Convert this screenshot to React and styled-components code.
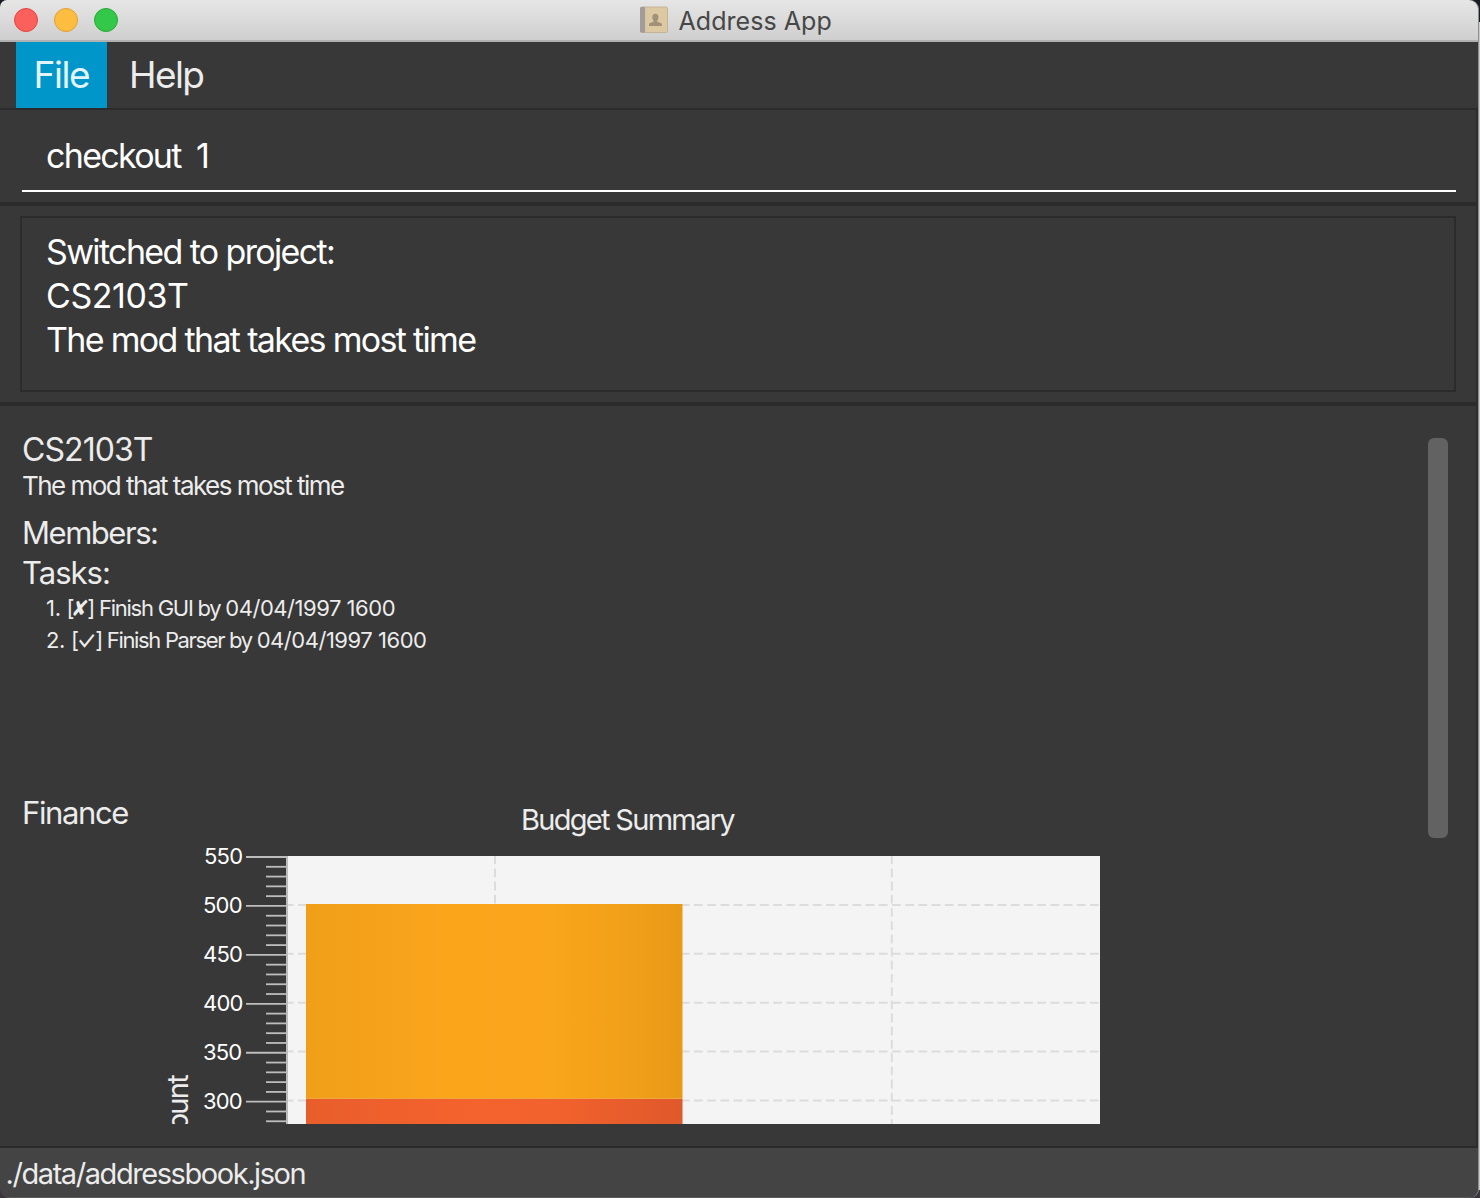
import React from 'react';
import styled, { createGlobalStyle } from 'styled-components';

const Global = createGlobalStyle`
  * { box-sizing: border-box; }
  body { margin: 0; background: linear-gradient(#171c25 0 22px, #c9c9c9 22px 1190px, #3b353b 1190px); }
`;

const Window = styled.div`
  width: 1478px;
  height: 1198px;
  display: flex;
  flex-direction: column;
  overflow: hidden;
  border-radius: 7px 9px 9px 9px;
  background: #383838;
  box-shadow: 1px 0 0 #8f8f8f;
  color: #ececec;
  font-family: Inter, "DejaVu Sans", sans-serif;
  white-space: pre;
`;

const TitleBar = styled.header`
  flex: none;
  height: 42px;
  display: flex;
  align-items: center;
  padding-left: 14px;
  background: linear-gradient(#e6e6e6, #cfcfcf);
  border-bottom: 2px solid #b1b1b1;
`;

const Lights = styled.div`
  display: flex;
  gap: 16px;
`;

const Light = styled.span`
  width: 24px;
  height: 24px;
  border-radius: 50%;
  background: ${(p) => p.$fill};
  border: 1px solid ${(p) => p.$edge};
`;

const Caption = styled.div`
  display: flex;
  align-items: center;
  margin-left: 522px;
  gap: 10.5px;
`;

const CaptionText = styled.span`
  padding-top: 2px;
  color: #474747;
  font-size: 25px;
  line-height: 30px;
  letter-spacing: 0.05px;
`;

const MenuBar = styled.nav`
  flex: none;
  height: 68px;
  display: flex;
  padding-left: 16px;
  border-bottom: 2px solid #2b2b2b;
`;

const MenuItem = styled.div`
  height: 66px;
  width: ${(p) => p.$width}px;
  padding-left: ${(p) => p.$inset}px;
  font-size: 37px;
  line-height: 66px;
  letter-spacing: ${(p) => p.$spacing}px;
  color: ${(p) => (p.$active ? '#e4f4fb' : '#ececec')};
  background: ${(p) => (p.$active ? '#0096c9' : 'transparent')};
`;

const Body = styled.main`
  flex: 1;
  display: flex;
  flex-direction: column;
  border-right: 2px solid #2d2d2d;
`;

const CommandPane = styled.section`
  flex: none;
  height: 96px;
  padding: 0 20px 10px 22px;
  border-bottom: 4px solid #2b2b2b;
`;

const CommandField = styled.div`
  height: 82px;
  padding: 24px 0 0 24px;
  border-bottom: 2px solid #fff;
  color: #fff;
  font-size: 34px;
  line-height: 43px;
  letter-spacing: -1.7px;
  word-spacing: 7.4px;
`;

const ResultPane = styled.section`
  flex: none;
  height: 200px;
  padding: 10px 20px 10px 20px;
  border-bottom: 4px solid #2b2b2b;
`;

const ResultBox = styled.div`
  height: 176px;
  padding: 12px 0 0 24px;
  border: 2px solid #2b2b2b;
  color: #fff;
  font-size: 34px;
  line-height: 44px;
`;

const Line = styled.div`
  letter-spacing: ${(p) => p.$spacing}px;
`;

const ProjectPane = styled.section`
  flex: 1;
  display: flex;
  justify-content: space-between;
  padding: 24px 28px 22px 22px;
`;

const Project = styled.div`
  height: 694px;
  overflow: hidden;
`;

const ScrollThumb = styled.div`
  flex: none;
  width: 20px;
  height: 400px;
  margin-top: 8px;
  border-radius: 6px;
  background: #626262;
`;

const ProjectName = styled.div`
  font-size: 32px;
  line-height: 39px;
  letter-spacing: -0.93px;
`;

const Description = styled.div`
  margin-top: 1px;
  font-size: 26px;
  line-height: 31px;
  letter-spacing: -1.52px;
`;

const Heading = styled.div`
  margin-top: ${(p) => p.$gap}px;
  font-size: 31px;
  line-height: 37px;
  letter-spacing: ${(p) => p.$spacing}px;
`;

const TaskList = styled.div`
  height: 202px;
  margin-top: 1px;
  padding-left: 24px;
`;

const Task = styled.div`
  display: flex;
  height: 32px;
  font-size: 22px;
  line-height: 32px;
`;

const TaskIndex = styled.span`
  letter-spacing: -0.3px;
`;

const Mark = styled.span`
  display: flex;
  justify-content: center;
  width: ${(p) => p.$width}px;
  transform: ${(p) => p.$shape};
`;

const TaskText = styled.span`
  letter-spacing: ${(p) => p.$spacing}px;
`;

const FinanceRow = styled.div`
  display: flex;
`;

const FinanceTitle = styled.div`
  width: 134px;
  font-size: 31px;
  line-height: 37px;
  letter-spacing: -1.38px;
`;

const ChartPanel = styled.div`
  width: 944px;
  padding-top: 8px;
`;

const ChartTitle = styled.div`
  height: 36px;
  padding-left: 365px;
  font-size: 29px;
  line-height: 35px;
  letter-spacing: -1.7px;
`;

const ChartSvg = styled.svg`
  display: block;
  font-family: Inter, sans-serif;
`;

const TickLabel = styled.text`
  font-size: 22px;
  letter-spacing: -0.8px;
  fill: #fff;
`;

const AxisLabel = styled.text`
  font-size: 29px;
  letter-spacing: -1.72px;
  fill: #ececec;
`;

const StatusBar = styled.footer`
  flex: none;
  height: 52px;
  padding: 8px 0 0 5.5px;
  border-top: 2px solid #2b2b2b;
  background: #444;
  box-shadow: inset 0 -1px 0 #5a5a5a;
  font-size: 29px;
  line-height: 35px;
  letter-spacing: -1.43px;
`;

const STEP = 48.94;
const TICKS = [550, 500, 450, 400, 350, 300];
const MINORS = Array.from({ length: 28 }, (_, i) => i).filter((i) => i % 5 !== 0);

function BookIcon() {
  return (
    <svg width="28" height="28" viewBox="0 0 28 28">
      <rect x="0.5" y="1" width="27" height="25.5" rx="1.5" fill="#dcc8a1" stroke="#c3b497" />
      <path d="M1.5 1H5v25.5H1.5A1.5 1.5 0 0 1 0 25V2.5A1.5 1.5 0 0 1 1.5 1Z" fill="#a39c98" />
      <path d="M5.5 1.5v24.5" stroke="#cfc5b5" />
      <path d="M9 20v-2.2c1.2-1.5 3.6-1.6 4.9-2.4-1.3-1.5-1.700-3.3-1.5-5 .2-1.900 1.600-2.600 3-2.600s2.800.7 3 2.600c.2 1.700-.2 3.500-1.500 5 1.300.8 3.800.9 5 2.400V20Z" fill="#a2917a" />
    </svg>
  );
}

function BudgetChart() {
  return (
    <ChartSvg width="944" height="286" viewBox="156 838 944 286">
      <defs>
        <linearGradient id="planned">
          <stop offset="0" stopColor="#f09f19" />
          <stop offset="0.2" stopColor="#f6a21b" />
          <stop offset="0.37" stopColor="#fba51b" />
          <stop offset="0.65" stopColor="#faa51b" />
          <stop offset="0.85" stopColor="#f1a019" />
          <stop offset="1" stopColor="#e89917" />
        </linearGradient>
        <linearGradient id="spent">
          <stop offset="0" stopColor="#e85e2b" />
          <stop offset="0.25" stopColor="#f0602d" />
          <stop offset="0.45" stopColor="#f4632d" />
          <stop offset="0.65" stopColor="#f2622d" />
          <stop offset="1" stopColor="#e0592a" />
        </linearGradient>
      </defs>
      <rect x="288" y="856" width="812" height="268" fill="#f4f4f4" />
      <g stroke="#dcdcdc" strokeWidth="2" strokeDasharray="8.8 4.4">
        <path d="M495 856V1124M891.8 856V1124" strokeDashoffset="0.8" />
        {TICKS.slice(1).map((t, i) => (
          <path key={t} d={`M288 ${905 + i * 48.87}H1100`} strokeDashoffset="3.2" />
        ))}
      </g>
      <rect x="306" y="904" width="376.5" height="194.5" fill="url(#planned)" />
      <rect x="306" y="1099" width="376.5" height="25" fill="url(#spent)" />
      <path d="M306 1098.5H682.5" stroke="#f2a73e" />
      <g stroke="#bdbdbd">
        <path d="M287 856V1124" strokeWidth="2" />
        {TICKS.map((t, i) => (
          <path key={t} d={`M246 ${857 + i * STEP}H286`} strokeWidth="1.8" />
        ))}
        {MINORS.map((i) => (
          <path key={i} d={`M266 ${857 + (i * STEP) / 5}H286`} strokeWidth="1.8" />
        ))}
      </g>
      {TICKS.map((t, i) => (
        <TickLabel key={t} x={t === 550 ? 204 : 203} y={864.4 + i * 48.94}>{t}</TickLabel>
      ))}
      <AxisLabel transform="translate(188 1172.3) rotate(-90)">Amount</AxisLabel>
    </ChartSvg>
  );
}

export default function App() {
  return (
    <>
      <Global />
      <Window>
        <TitleBar>
          <Lights>
            <Light $fill="#fc605c" $edge="#e2463f" />
            <Light $fill="#fdbd41" $edge="#dfa033" />
            <Light $fill="#34c84a" $edge="#27aa35" />
          </Lights>
          <Caption>
            <BookIcon />
            <CaptionText>Address App</CaptionText>
          </Caption>
        </TitleBar>
        <MenuBar>
          <MenuItem $active $width={91} $inset={17.5} $spacing={-1.42}>File</MenuItem>
          <MenuItem $width={110} $inset={22} $spacing={-1.57}>Help</MenuItem>
        </MenuBar>
        <Body>
          <CommandPane>
            <CommandField>checkout 1</CommandField>
          </CommandPane>
          <ResultPane>
            <ResultBox>
              <Line $spacing={-1.64}>Switched to project:</Line>
              <Line $spacing={-0.44}>CS2103T</Line>
              <Line $spacing={-1.68}>The mod that takes most time</Line>
            </ResultBox>
          </ResultPane>
          <ProjectPane>
            <Project>
              <ProjectName>CS2103T</ProjectName>
              <Description>The mod that takes most time</Description>
              <Heading $gap={13} $spacing={-1.47}>Members:</Heading>
              <Heading $gap={3} $spacing={-0.98}>Tasks:</Heading>
              <TaskList>
                <Task>
                  <TaskIndex>1. [</TaskIndex>
                  <Mark $width={13} $shape="translateX(-0.5px) skewX(-10deg) scaleX(0.85)">✘</Mark>
                  <TaskText $spacing={-1.26}>] Finish GUI by </TaskText>
                  <TaskText $spacing={-0.47}>04/04/1997 1600</TaskText>
                </Task>
                <Task>
                  <TaskIndex>2. [</TaskIndex>
                  <Mark $width={16.5} $shape="translateX(-0.5px) scale(1, 1.25)">✓</Mark>
                  <TaskText $spacing={-1.34}>] Finish Parser by </TaskText>
                  <TaskText $spacing={-0.47}>04/04/1997 1600</TaskText>
                </Task>
              </TaskList>
              <FinanceRow>
                <FinanceTitle>Finance</FinanceTitle>
                <ChartPanel>
                  <ChartTitle>Budget Summary</ChartTitle>
                  <BudgetChart />
                </ChartPanel>
              </FinanceRow>
            </Project>
            <ScrollThumb />
          </ProjectPane>
        </Body>
        <StatusBar>./data/addressbook.json</StatusBar>
      </Window>
    </>
  );
}
